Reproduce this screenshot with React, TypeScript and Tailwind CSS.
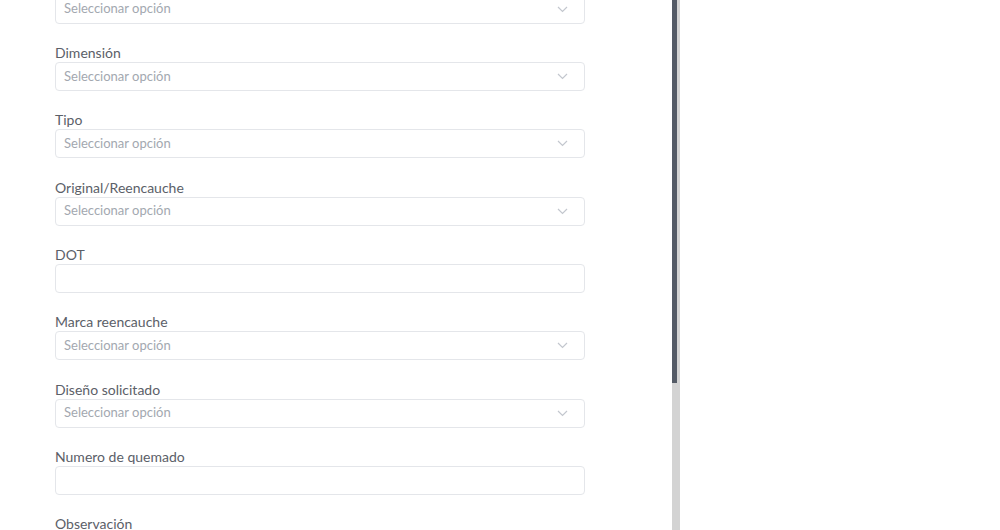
import { ReactNode } from 'react';

const FIELDS: { label: string; kind: 'select' | 'text' }[] = [
  { label: 'Dimensión', kind: 'select' },
  { label: 'Tipo', kind: 'select' },
  { label: 'Original/Reencauche', kind: 'select' },
  { label: 'DOT', kind: 'text' },
  { label: 'Marca reencauche', kind: 'select' },
  { label: 'Diseño solicitado', kind: 'select' },
  { label: 'Numero de quemado', kind: 'text' },
];

function Chevron() {
  return (
    <svg width="11" height="7" viewBox="0 0 11 7" fill="none" className="text-[#c3c7ce]">
      <path d="M1 1l4.5 4.5L10 1" stroke="currentColor" strokeWidth="1.2" />
    </svg>
  );
}

function Box({ children }: { children?: ReactNode }) {
  return (
    <div className="h-[29px] w-[530px] rounded-[4px] border border-[#e4e6ea] bg-white flex items-center justify-between pl-[8px] pr-[16px]">
      {children}
    </div>
  );
}

function Select() {
  return (
    <Box>
      <span className="text-[13px] text-[#a3a8b0]">Seleccionar opción</span>
      <Chevron />
    </Box>
  );
}

export default function App() {
  return (
    <div className="h-[530px] w-[1000px] overflow-hidden bg-white flex font-['Lato',sans-serif]">
      <div className="w-[672px] pl-[55px] overflow-hidden">
        <div className="mt-[-5.33px] flex flex-col">
          <Select />
          {FIELDS.map((f) => (
            <div key={f.label} className="mt-[19.33px] flex flex-col">
              <label className="h-[19px] text-[14px] leading-[20px] text-[#5b6068]">{f.label}</label>
              {f.kind === 'select' ? <Select /> : <Box />}
            </div>
          ))}
          <div className="mt-[19.33px] flex flex-col">
            <label className="h-[19px] text-[14px] leading-[20px] text-[#5b6068]">Observación</label>
            <div className="h-[80px] w-[530px] rounded-[4px] border border-[#e4e6ea]" />
          </div>
        </div>
      </div>
      <div className="w-[8px] h-full bg-[#d3d3d3] flex flex-col">
        <div className="h-[383px] w-[5px] bg-[#545b66]" />
      </div>
      <div className="flex-1" />
    </div>
  );
}
